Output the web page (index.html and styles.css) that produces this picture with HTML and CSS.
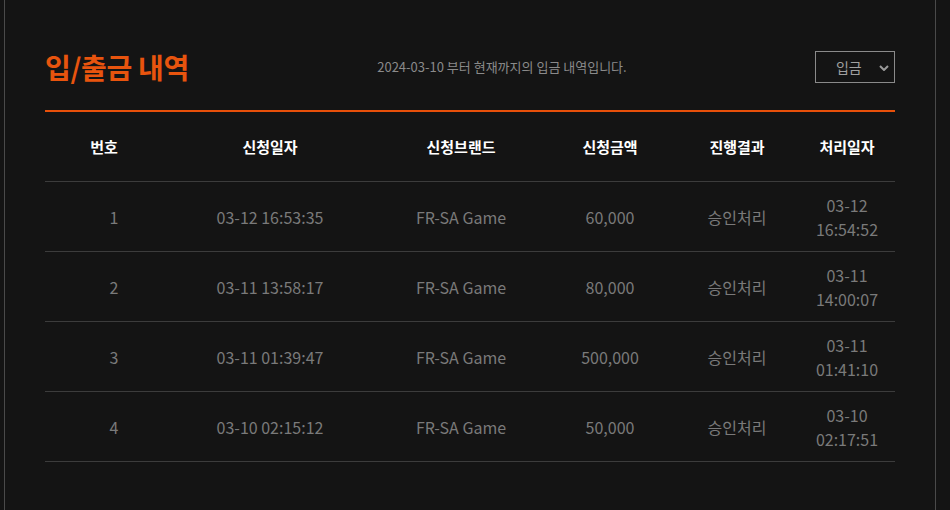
FILE: index.html
```html
<!DOCTYPE html>
<html>
<head>
<meta charset="utf-8">
<title>입/출금 내역</title>
<link rel="stylesheet" href="styles.css">
</head>
<body>
<div class="panel">
  <div class="head">
    <h1 class="title">입/출금 내역</h1>
    <p class="desc">2024-03-10 부터 현재까지의 입금 내역입니다.</p>
    <span class="select-wrap">
      <select class="select">
        <option>입금</option>
        <option>출금</option>
      </select>
      <svg class="chev" width="10" height="6" viewBox="0 0 10 6"><path d="M1 1 L5 5 L9 1" fill="none" stroke="#9a9a9a" stroke-width="2"/></svg>
    </span>
  </div>
  <table class="list">
    <colgroup>
      <col class="c1"><col class="c2"><col class="c3"><col class="c4"><col class="c5"><col class="c6">
    </colgroup>
    <thead>
      <tr><th>번호</th><th>신청일자</th><th>신청브랜드</th><th>신청금액</th><th>진행결과</th><th>처리일자</th></tr>
    </thead>
    <tbody>
      <tr><td class="num">1</td><td>03-12 16:53:35</td><td>FR-SA Game</td><td>60,000</td><td>승인처리</td><td>03-12<br>16:54:52</td></tr>
      <tr><td class="num">2</td><td>03-11 13:58:17</td><td>FR-SA Game</td><td>80,000</td><td>승인처리</td><td>03-11<br>14:00:07</td></tr>
      <tr><td class="num">3</td><td>03-11 01:39:47</td><td>FR-SA Game</td><td>500,000</td><td>승인처리</td><td>03-11<br>01:41:10</td></tr>
      <tr><td class="num">4</td><td>03-10 02:15:12</td><td>FR-SA Game</td><td>50,000</td><td>승인처리</td><td>03-10<br>02:17:51</td></tr>
    </tbody>
  </table>
</div>
</body>
</html>
```
FILE: styles.css
```css
html, body {
  margin: 0;
  padding: 0;
  background: #141414;
  height: 100%;
  overflow: hidden;
}
body {
  font-family: "Noto Sans CJK KR", "Noto Sans", sans-serif;
}
.panel {
  margin-left: 4px;
  width: 850px;
  padding: 0 40px;
  min-height: 100%;
  border-left: 1px solid #4a4a4a;
  border-right: 1px solid #4a4a4a;
}
.head {
  display: flex;
  justify-content: space-between;
  align-items: center;
  padding: 51px 0 27px;
  border-bottom: 2px solid #e8500a;
}
.title {
  margin: 0;
  font-size: 28px;
  font-weight: 700;
  color: #e8540e;
  line-height: 32px;
  letter-spacing: -0.3px;
}
.desc {
  margin: 0;
  font-size: 13px;
  color: #8a8a8a;
  line-height: 32px;
}
.select-wrap {
  position: relative;
  display: block;
  width: 80px;
  height: 32px;
}
.select {
  appearance: none;
  -webkit-appearance: none;
  width: 80px;
  height: 32px;
  margin: 0;
  padding: 0 0 0 20px;
  background: transparent;
  border: 1px solid #8a8a8a;
  border-radius: 0;
  color: #a0a0a0;
  font-family: "Noto Sans CJK KR", sans-serif;
  font-size: 14px;
  outline: none;
}
.chev {
  position: absolute;
  right: 6px;
  top: 14px;
  pointer-events: none;
}
.list {
  width: 850px;
  border-collapse: collapse;
  table-layout: fixed;
}
.c1 { width: 118px; }
.c2 { width: 214px; }
.c3 { width: 168px; }
.c4 { width: 130px; }
.c5 { width: 124px; }
.c6 { width: 96px; }
.list th {
  height: 69px;
  padding: 0;
  color: #ffffff;
  font-size: 15px;
  font-weight: 700;
  text-align: center;
  border-bottom: 1px solid #3c3c3c;
}
.list td {
  height: 69px;
  padding: 0;
  color: #7a7a7a;
  font-size: 16px;
  line-height: 24px;
  text-align: center;
  border-bottom: 1px solid #3c3c3c;
}
.list td.num {
  padding-left: 20px;
}
```
